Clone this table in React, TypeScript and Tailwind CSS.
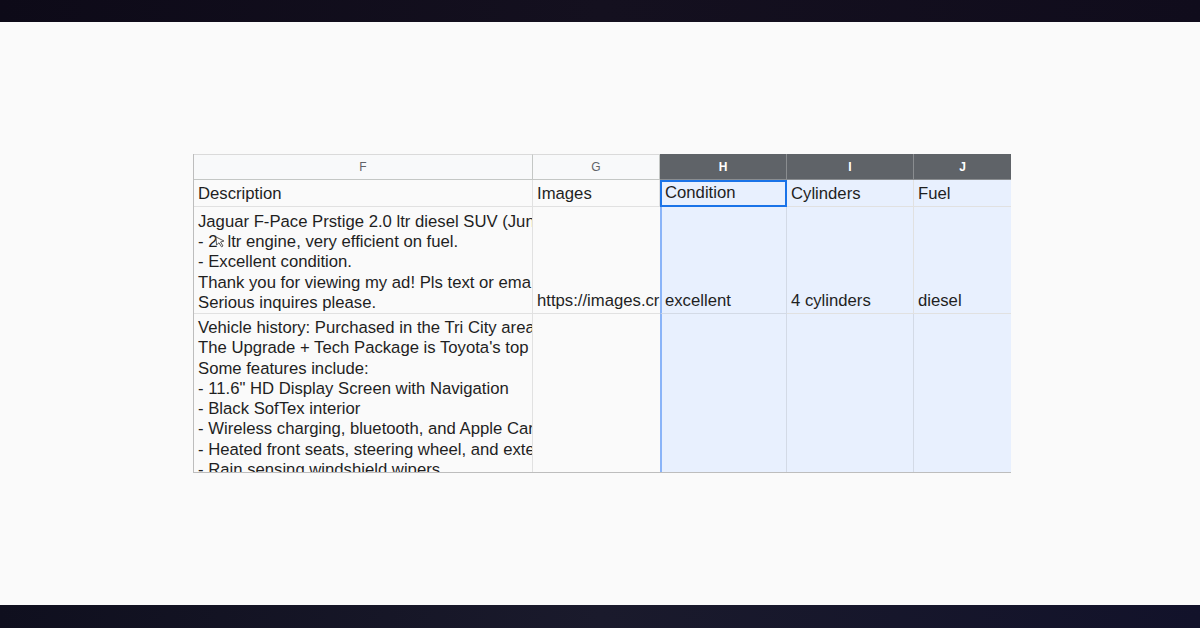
import React from "react";

const font = { fontFamily: '"Liberation Sans", Arial, sans-serif' };

function Cursor() {
  return (
    <svg width="14" height="14" viewBox="0 0 14 14" className="inline-block align-[-1px] -ml-[3px] -mr-[1px]">
      <path d="M2 3 L10 7 L6.5 8 L9 12 L7.5 12.8 L5 8.8 L2.5 11 Z" fill="#fff" stroke="#555" strokeWidth="1" />
    </svg>
  );
}

export default function App() {
  const desc1 = [
    "Jaguar F-Pace Prstige 2.0 ltr diesel SUV (Jun",
    "CURSOR",
    "- Excellent condition.",
    "Thank you for viewing my ad! Pls text or ema",
    "Serious inquires please.",
  ];
  const desc2 = [
    "Vehicle history: Purchased in the Tri City area",
    "The Upgrade + Tech Package is Toyota's top",
    "Some features include:",
    '- 11.6" HD Display Screen with Navigation',
    "- Black SofTex interior",
    "- Wireless charging, bluetooth, and Apple Car",
    "- Heated front seats, steering wheel, and exte",
    "- Rain sensing windshield wipers",
  ];
  const sel = "bg-[#e8f0fe]";
  const cell = "border-r border-b border-[#e1e1e1] overflow-hidden whitespace-nowrap text-[16.7px] text-[#1f1f1f] pl-[4px]";
  return (
    <div className="w-[1200px] h-[628px] flex flex-col bg-[#fafafa]" style={font}>
      <div className="h-[22px] bg-gradient-to-r from-[#0d0a18] via-[#14101f] to-[#100c1c]" />
      <div className="flex-1 flex flex-col">
        <div className="h-[132px]" />
        <div className="ml-[193px] w-[818px] border-l border-r border-b border-[#bdbdbd] grid grid-cols-[339px_127px_127px_127px_97px] grid-rows-[26px_27px_107px_158px]">
          {/* column headers */}
          <div className="bg-[#f8f9fa] border-r border-b border-[#c4c7c5] border-t border-t-[#dadada] flex items-center justify-center text-[12px] text-[#5f6368]">F</div>
          <div className="bg-[#f8f9fa] border-r border-b border-[#c4c7c5] border-t border-t-[#dadada] flex items-center justify-center text-[12px] text-[#5f6368]">G</div>
          <div className="bg-[#5f6368] border-r border-b border-[#8a8d90] flex items-center justify-center text-[12px] font-bold text-white">H</div>
          <div className="bg-[#5f6368] border-r border-b border-[#8a8d90] flex items-center justify-center text-[12px] font-bold text-white">I</div>
          <div className="bg-[#5f6368] border-b border-[#8a8d90] flex items-center justify-center text-[12px] font-bold text-white">J</div>

          {/* row 1 */}
          <div className={`${cell} flex items-end pb-0`}>Description</div>
          <div className={`${cell} flex items-end pb-0`}>Images</div>
          <div className={`${sel} border-2 border-[#1a73e8] overflow-hidden whitespace-nowrap text-[16.7px] text-[#1f1f1f] pl-[3px] flex items-end pb-0`}>Condition</div>
          <div className={`${cell} ${sel} border-[#d3dae6] flex items-end pb-0`}>Cylinders</div>
          <div className={`${cell} ${sel} border-r-0 border-[#d3dae6] flex items-end pb-0`}>Fuel</div>

          {/* row 2 */}
          <div className={`${cell} flex flex-col justify-end pb-0 leading-[20.25px]`}>
            {desc1.map((l, i) =>
              l === "CURSOR" ? (
                <div key={i}>
                  - 2<Cursor />ltr engine, very efficient on fuel.
                </div>
              ) : (
                <div key={i}>{l}</div>
              )
            )}
          </div>
          <div className={`${cell} flex items-end pb-0 border-r-0`}>https://images.craigslist.org</div>
          <div className={`${sel} border-l-2 border-l-[#8ab4f8] border-r border-b border-[#d3dae6] overflow-hidden whitespace-nowrap text-[16.7px] text-[#1f1f1f] pl-[3px] flex items-end pb-0`}>excellent</div>
          <div className={`${cell} ${sel} border-[#d3dae6] flex items-end pb-0`}>4 cylinders</div>
          <div className={`${cell} ${sel} border-r-0 border-[#d3dae6] flex items-end pb-0`}>diesel</div>

          {/* row 3 */}
          <div className={`${cell} border-b-0 pt-[4px] leading-[20.25px]`}>
            {desc2.map((l, i) => (
              <div key={i}>{l}</div>
            ))}
          </div>
          <div className={`${cell} border-b-0 border-r-0`} />
          <div className={`${sel} border-l-2 border-l-[#8ab4f8] border-r border-[#d3dae6]`} />
          <div className={`${sel} border-r border-[#d3dae6]`} />
          <div className={`${sel}`} />
        </div>
        <div className="flex-1" />
      </div>
      <div className="h-[23px] bg-gradient-to-r from-[#0f0f1e] via-[#1a1a2c] to-[#12122a]" />
    </div>
  );
}
